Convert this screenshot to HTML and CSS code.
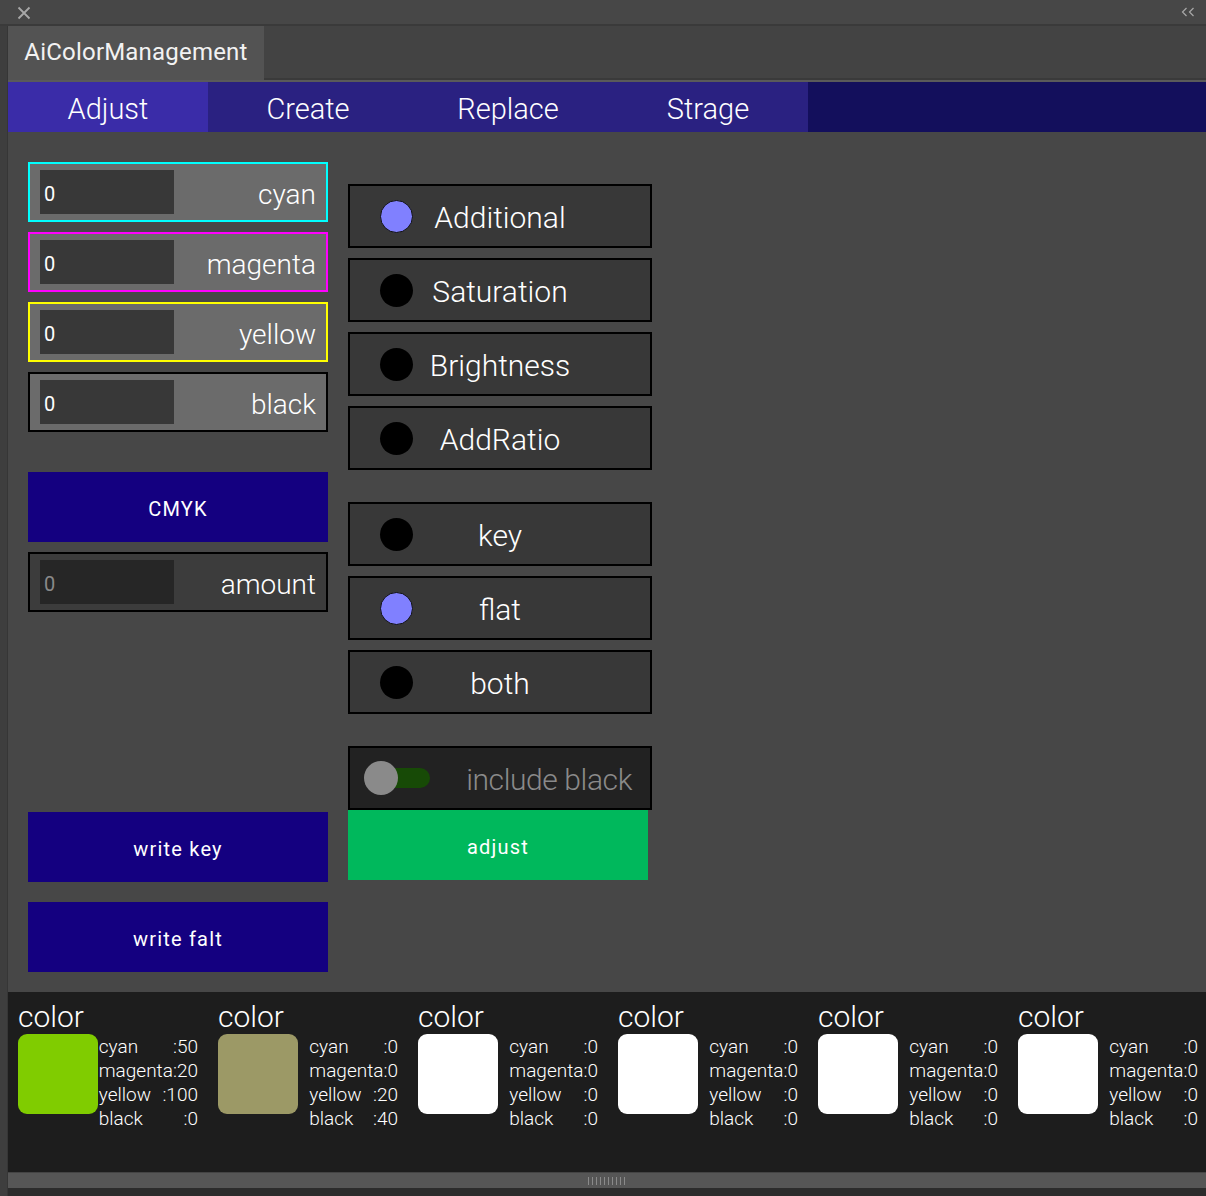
FILE: index.html
```html
<!DOCTYPE html>
<html lang="en">
<head>
<meta charset="utf-8">
<title>AiColorManagement</title>
<link rel="stylesheet" href="styles.css">
</head>
<body>
<div class="app">
  <header class="topbar">
    <svg class="icon-close" width="14" height="14" viewBox="0 0 14 14"><path d="M1.5 1.5 L12.5 12.5 M12.5 1.5 L1.5 12.5" stroke="#a8a8a8" stroke-width="1.8" fill="none"/></svg>
    <svg class="icon-collapse" width="14" height="10" viewBox="0 0 14 10"><path d="M5.5 1 L1.5 5 L5.5 9 M12.5 1 L8.5 5 L12.5 9" stroke="#a8a8a8" stroke-width="1.2" fill="none"/></svg>
  </header>
  <div class="main">
    <div class="side"></div>
    <div class="panel">
      <div class="tabbar"><div class="tab">AiColorManagement</div></div>
      <nav class="nav">
        <div class="nav-item active">Adjust</div>
        <div class="nav-item">Create</div>
        <div class="nav-item">Replace</div>
        <div class="nav-item">Strage</div>
        <div class="nav-fill"></div>
      </nav>
      <section class="content">
        <div class="col-left">
          <div class="fields">
            <label class="field field-cyan"><input class="num" value="0"><span class="field-label">cyan</span></label>
            <label class="field field-magenta"><input class="num" value="0"><span class="field-label">magenta</span></label>
            <label class="field field-yellow"><input class="num" value="0"><span class="field-label">yellow</span></label>
            <label class="field field-black"><input class="num" value="0"><span class="field-label">black</span></label>
          </div>
          <button class="btn btn-blue btn-cmyk">CMYK</button>
          <label class="field field-amount"><input class="num num-dim" placeholder="0"><span class="field-label">amount</span></label>
          <button class="btn btn-blue btn-writekey">write key</button>
          <button class="btn btn-blue">write falt</button>
        </div>
        <div class="col-right">
          <div class="radio-group">
            <div class="radio"><span class="dot on"></span><span class="radio-label">Additional</span></div>
            <div class="radio"><span class="dot"></span><span class="radio-label">Saturation</span></div>
            <div class="radio"><span class="dot"></span><span class="radio-label">Brightness</span></div>
            <div class="radio"><span class="dot"></span><span class="radio-label">AddRatio</span></div>
          </div>
          <div class="radio-group group-gap">
            <div class="radio"><span class="dot"></span><span class="radio-label">key</span></div>
            <div class="radio"><span class="dot on"></span><span class="radio-label">flat</span></div>
            <div class="radio"><span class="dot"></span><span class="radio-label">both</span></div>
          </div>
          <div class="toggle-row">
            <span class="switch"><span class="track"></span><span class="knob"></span></span>
            <span class="toggle-label">include black</span>
          </div>
          <button class="btn btn-green">adjust</button>
        </div>
      </section>
      <section class="palette">
        <div class="swatch-item">
          <div class="swatch-title">color</div>
          <div class="swatch-row">
            <div class="chip" style="background:#80cc00"></div>
            <div class="values">
              <div class="vrow"><span>cyan</span><span>:50</span></div>
              <div class="vrow"><span>magenta</span><span>:20</span></div>
              <div class="vrow"><span>yellow</span><span>&nbsp;:100</span></div>
              <div class="vrow"><span>black</span><span>:0</span></div>
            </div>
          </div>
        </div>
        <div class="swatch-item">
          <div class="swatch-title">color</div>
          <div class="swatch-row">
            <div class="chip" style="background:#9c9966"></div>
            <div class="values">
              <div class="vrow"><span>cyan</span><span>:0</span></div>
              <div class="vrow"><span>magenta</span><span>:0</span></div>
              <div class="vrow"><span>yellow</span><span>:20</span></div>
              <div class="vrow"><span>black</span><span>:40</span></div>
            </div>
          </div>
        </div>
        <div class="swatch-item">
          <div class="swatch-title">color</div>
          <div class="swatch-row">
            <div class="chip" style="background:#ffffff"></div>
            <div class="values">
              <div class="vrow"><span>cyan</span><span>:0</span></div>
              <div class="vrow"><span>magenta</span><span>:0</span></div>
              <div class="vrow"><span>yellow</span><span>:0</span></div>
              <div class="vrow"><span>black</span><span>:0</span></div>
            </div>
          </div>
        </div>
        <div class="swatch-item">
          <div class="swatch-title">color</div>
          <div class="swatch-row">
            <div class="chip" style="background:#ffffff"></div>
            <div class="values">
              <div class="vrow"><span>cyan</span><span>:0</span></div>
              <div class="vrow"><span>magenta</span><span>:0</span></div>
              <div class="vrow"><span>yellow</span><span>:0</span></div>
              <div class="vrow"><span>black</span><span>:0</span></div>
            </div>
          </div>
        </div>
        <div class="swatch-item">
          <div class="swatch-title">color</div>
          <div class="swatch-row">
            <div class="chip" style="background:#ffffff"></div>
            <div class="values">
              <div class="vrow"><span>cyan</span><span>:0</span></div>
              <div class="vrow"><span>magenta</span><span>:0</span></div>
              <div class="vrow"><span>yellow</span><span>:0</span></div>
              <div class="vrow"><span>black</span><span>:0</span></div>
            </div>
          </div>
        </div>
        <div class="swatch-item">
          <div class="swatch-title">color</div>
          <div class="swatch-row">
            <div class="chip" style="background:#ffffff"></div>
            <div class="values">
              <div class="vrow"><span>cyan</span><span>:0</span></div>
              <div class="vrow"><span>magenta</span><span>:0</span></div>
              <div class="vrow"><span>yellow</span><span>:0</span></div>
              <div class="vrow"><span>black</span><span>:0</span></div>
            </div>
          </div>
        </div>
      </section>
      <div class="hscroll"><span class="grip"></span></div>
      <div class="bottom"></div>
    </div>
  </div>
</div>
</body>
</html>
```

FILE: styles.css
```css
* { box-sizing: border-box; }
html, body { margin: 0; padding: 0; }
body {
  background: #3d3d3d;
  font-family: Roboto, "Liberation Sans", sans-serif;
  color: #fff;
  width: 1206px;
  height: 1196px;
  overflow: hidden;
}
.app { width: 1206px; }
.topbar {
  height: 26px;
  background: #474747;
  border-bottom: 2px solid #3a3a3a;
  display: flex;
  align-items: center;
  justify-content: space-between;
  padding: 0 11px 0 17px;
}
.icon-close { margin-top: 1px; }
.icon-collapse { margin-top: -1px; }
.main { display: flex; }
.side {
  width: 8px;
  flex: none;
  background: #3e3e3e;
  border-right: 1px solid #363636;
}
.panel { flex: 1; min-width: 0; overflow: hidden; }
.tabbar {
  height: 54px;
  background: #434343;
  border-bottom: 2px solid #3a3a3a;
  display: flex;
}
.tab {
  width: 256px;
  height: 54px;
  background: #535353;
  display: flex;
  align-items: center;
  justify-content: center;
  font-size: 24px;
  letter-spacing: 0.2px;
  color: #f2f2f2;
  padding-bottom: 3px;
}
.nav {
  height: 52px;
  border-top: 2px solid #5a5a5a;
  display: flex;
  background: #130f5c;
}
.nav-item {
  width: 200px;
  background: #2a2181;
  display: flex;
  align-items: center;
  justify-content: center;
  font-size: 29px;
  font-weight: 300;
  color: #fff;
  padding-top: 4px;
}
.nav-item.active { background: #3a2ca8; }
.nav-fill { flex: 1; }

.content {
  height: 860px;
  background: #474747;
  padding: 30px 20px 20px 20px;
  display: flex;
  gap: 20px;
}
.col-left {
  width: 300px;
  display: flex;
  flex-direction: column;
}
.fields { display: flex; flex-direction: column; gap: 10px; }
.field {
  height: 60px;
  border: 2px solid #000;
  background: #6b6b6b;
  display: flex;
  align-items: center;
  padding: 0 10px;
}
.field-cyan { border-color: #00ffff; }
.field-magenta { border-color: #ff00ff; }
.field-yellow { border-color: #ffff00; }
.field-amount { background: #3c3c3c; margin-top: 10px; }
.num {
  width: 134px;
  height: 44px;
  border: 0;
  outline: none;
  background: #383838;
  color: #fff;
  font-family: Roboto, "Liberation Sans", sans-serif;
  font-size: 20px;
  font-weight: 400;
  padding: 3px 4px 0 4px;
  margin: 0;
}
.num-dim { background: #262626; }
.num-dim::placeholder { color: #8a8a8a; }
.field-label {
  flex: 1;
  text-align: right;
  font-size: 28px;
  font-weight: 300;
  color: #fff;
  padding-top: 4px;
}
.btn {
  height: 70px;
  border: 0;
  width: 300px;
  font-family: Roboto, "Liberation Sans", sans-serif;
  font-size: 20px;
  letter-spacing: 1.2px;
  color: #fff;
  padding: 3px 0 0 0;
  display: block;
}
.btn-blue { background: #140080; }
.btn-cmyk { margin-top: 40px; }
.btn-writekey { margin-top: auto; margin-bottom: 20px; }
.btn-green { background: #00b85c; }

.col-right {
  width: 304px;
  padding-top: 22px;
  display: flex;
  flex-direction: column;
}
.radio-group { display: flex; flex-direction: column; gap: 10px; }
.group-gap { margin-top: 32px; }
.radio {
  height: 64px;
  border: 2px solid #000;
  background: #383838;
  display: grid;
  grid-template-columns: 33px 1fr 63px;
  align-items: center;
  padding-left: 30px;
}
.dot {
  width: 33px;
  height: 33px;
  border-radius: 50%;
  background: #000;
}
.dot.on { background: #8080ff; border: 1.5px solid #111; }
.radio-label {
  text-align: center;
  font-size: 30px;
  font-weight: 300;
  color: #fff;
  padding-top: 2px;
}
.toggle-row {
  margin-top: 32px;
  height: 64px;
  border: 2px solid #000;
  background: #222;
  display: flex;
  align-items: center;
  padding: 0 18px 0 14px;
}
.switch {
  position: relative;
  width: 68px;
  height: 34px;
  flex: none;
}
.track {
  position: absolute;
  left: 16px;
  top: 7px;
  width: 50px;
  height: 20px;
  border-radius: 10px;
  background: #174a06;
}
.knob {
  position: absolute;
  left: 0;
  top: 0;
  width: 34px;
  height: 34px;
  border-radius: 50%;
  background: #8a8a8a;
}
.toggle-label {
  flex: 1;
  text-align: right;
  font-size: 30px;
  font-weight: 300;
  letter-spacing: -0.4px;
  color: #8a8a8a;
  padding-top: 2px;
}

.palette {
  height: 180px;
  background: #1d1d1d;
  display: flex;
  padding: 8px 0 0 10px;
  overflow: hidden;
}
.swatch-item { width: 200px; flex: none; }
.swatch-title {
  font-size: 30px;
  font-weight: 300;
  line-height: 34px;
  height: 34px;
}
.swatch-row {
  display: flex;
  width: 180px;
}
.chip {
  width: 80px;
  height: 80px;
  border-radius: 9px;
  flex: none;
}
.values {
  margin-left: auto;
  font-size: 19px;
  font-weight: 300;
  line-height: 24px;
  margin-top: 1px;
  white-space: nowrap;
}
.vrow { display: flex; justify-content: space-between; }
.hscroll {
  height: 16px;
  background: #565656;
  border-top: 1px solid #444;
  display: flex;
  justify-content: center;
  align-items: center;
}
.grip {
  width: 38px;
  height: 8px;
  background: repeating-linear-gradient(90deg, #8a8a8a 0 1px, transparent 1px 4px);
}
.bottom { height: 10px; background: #2c2c2c; }
```
